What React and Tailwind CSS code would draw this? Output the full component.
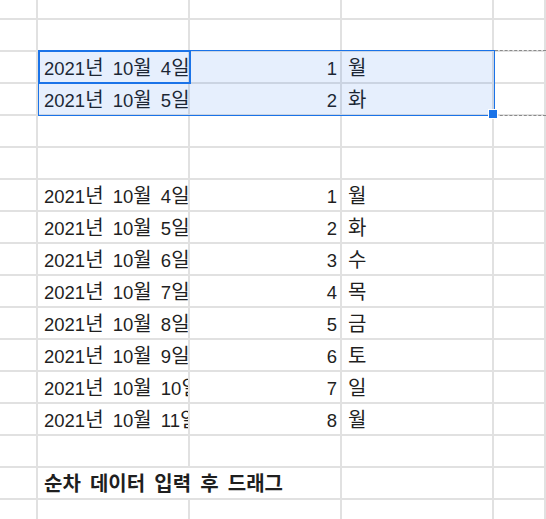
const FONT = { fontFamily: '"Liberation Sans", Arial, "Noto Sans CJK KR", sans-serif' };

const rows = [
  { h: "h-[20px]" },
  { h: "h-[32px]" },
  { h: "h-[32px]", a: "2021년 10월 4일", b: "1", c: "월" },
  { h: "h-[32px]", a: "2021년 10월 5일", b: "2", c: "화" },
  { h: "h-[32px]" },
  { h: "h-[32px]" },
  { h: "h-[32px]", a: "2021년 10월 4일", b: "1", c: "월" },
  { h: "h-[32px]", a: "2021년 10월 5일", b: "2", c: "화" },
  { h: "h-[32px]", a: "2021년 10월 6일", b: "3", c: "수" },
  { h: "h-[32px]", a: "2021년 10월 7일", b: "4", c: "목" },
  { h: "h-[32px]", a: "2021년 10월 8일", b: "5", c: "금" },
  { h: "h-[32px]", a: "2021년 10월 9일", b: "6", c: "토" },
  { h: "h-[32px]", a: "2021년 10월 10일", b: "7", c: "일" },
  { h: "h-[32px]", a: "2021년 10월 11일", b: "8", c: "월" },
  { h: "h-[32px]" },
  { h: "h-[32px]", bold: "순차 데이터 입력 후 드래그" },
  { h: "h-[32px]" },
];

// Hangul glyphs look larger than the Latin ones in the sheet
function Txt({ s }) {
  if (!s) return null;
  return s.split(/([가-힣]+)/).map((part, i) =>
    /[가-힣]/.test(part) ? (
      <span key={i} className="text-[20px]" style={{ fontFamily: '"Noto Sans CJK KR", sans-serif' }}>
        {part}
      </span>
    ) : (
      <span key={i} className="whitespace-pre">{part}</span>
    )
  );
}

const cell = "border-r-2 border-b-2 border-[#e1e1e1] flex items-end pb-[3px] overflow-hidden whitespace-nowrap";

export default function App() {
  return (
    <div className="relative w-[546px] h-[519px] overflow-hidden bg-white text-[18.5px] leading-[20px] text-[#1f1f1f] [word-spacing:4px]" style={FONT}>
      {rows.map((r, i) => (
        <div key={i} className={`grid grid-cols-[38px_152px_152px_152px_1fr] ${r.h}`}>
          <div className={cell} />
          {r.bold ? (
            <div className="col-span-2 border-b-2 border-r-2 border-[#e1e1e1] flex items-end pb-[3px] pl-[6px] whitespace-nowrap font-bold">
              <span><Txt s={r.bold} /></span>
            </div>
          ) : (
            <>
              <div className={`${cell} pl-[6px]`}><span><Txt s={r.a} /></span></div>
              <div className={`${cell} justify-end pr-[3px]`}>{r.b}</div>
            </>
          )}
          <div className={`${cell} pl-[6px]`}><span><Txt s={r.c} /></span></div>
          <div className={cell} />
        </div>
      ))}

      {/* selection */}
      <div className="absolute left-[38px] top-[50px] w-[457px] h-[66px] border border-[#1a73e8] bg-[#0e65eb]/10" />
      <div className="absolute left-[38px] top-[50px] w-[153px] h-[34px] border-2 border-[#1a73e8]" />
      <div className="absolute left-[495px] right-0 top-[50px] border-t border-dashed border-[#8a8a8a]" />
      <div className="absolute left-[495px] right-0 top-[115px] border-t border-dashed border-[#8a8a8a]" />
      <div className="absolute left-[488px] top-[109px] w-[10px] h-[10px] bg-[#1a73e8] border border-white" />
    </div>
  );
}
